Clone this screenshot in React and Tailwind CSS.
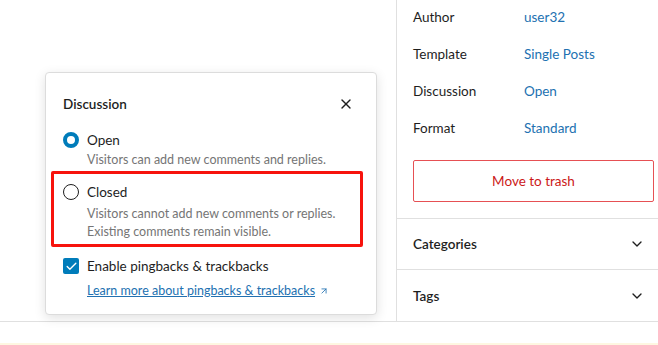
import { X, ChevronDown, Check, ArrowUpRight } from 'lucide-react'

const FONT = { fontFamily: 'Lato, "Liberation Sans", sans-serif' }

const META = [
  { label: 'Author', value: 'user32' },
  { label: 'Template', value: 'Single Posts' },
  { label: 'Discussion', value: 'Open' },
  { label: 'Format', value: 'Standard' },
]

function Radio({ checked }) {
  return checked ? (
    <span className="w-4 h-4 rounded-full border-[4px] border-[#007cba] bg-white flex-shrink-0" />
  ) : (
    <span className="w-4 h-4 rounded-full border border-[#1e1e1e] bg-white flex-shrink-0" />
  )
}

function DiscussionPopover() {
  return (
    <div className="absolute left-[45px] top-[72px] w-[332px] h-[243px] bg-white border border-[#dcdcdc] rounded-[4px] shadow-[0_3px_12px_rgba(0,0,0,0.12)] px-[17px] pt-[22px]">
      {/* Header */}
      <div className="flex items-center justify-between h-[18px]">
        <span className="text-[13.5px] font-semibold text-[#1e1e1e]">Discussion</span>
        <X size={16} strokeWidth={2} className="text-[#1e1e1e] mr-[5px]" />
      </div>

      {/* Open */}
      <div className="mt-[18px]">
        <div className="flex items-center gap-2 h-[18px]">
          <Radio checked />
          <span className="text-[13.5px] text-[#1e1e1e]">Open</span>
        </div>
        <div className="pl-6 mt-[2px] text-[12.5px] leading-[18px] text-[#757575]">
          Visitors can add new comments and replies.
        </div>
      </div>

      {/* Closed */}
      <div className="mt-[14px]">
        <div className="flex items-center gap-2 h-[18px]">
          <Radio />
          <span className="text-[13.5px] text-[#1e1e1e]">Closed</span>
        </div>
        <div className="pl-6 mt-[4px] text-[12.5px] leading-[18px] text-[#757575]">
          Visitors cannot add new comments or replies.
          <br />
          Existing comments remain visible.
        </div>
      </div>

      {/* Pingbacks */}
      <div className="mt-[16px] flex items-center gap-2 h-[18px]">
        <span className="w-4 h-4 rounded-[2px] bg-[#007cba] flex items-center justify-center flex-shrink-0">
          <Check size={13} strokeWidth={2.5} className="text-white" />
        </span>
        <span className="text-[13.5px] text-[#1e1e1e]">Enable pingbacks &amp; trackbacks</span>
      </div>
      <div className="mt-[7px] pl-6 flex items-center gap-1 h-[18px]">
        <span className="text-[12.5px] text-[#2271b1] underline">Learn more about pingbacks &amp; trackbacks</span>
        <ArrowUpRight size={10} strokeWidth={2} className="text-[#2271b1]" />
      </div>

      {/* Highlight annotation */}
      <div className="absolute left-[5px] top-[98px] w-[312px] h-[76px] border-[3px] border-[#f7130d] rounded-[2px] pointer-events-none" />
    </div>
  )
}

export default function App() {
  return (
    <div className="w-[658px] h-[345px] bg-white overflow-hidden flex flex-col" style={FONT}>
      <div className="flex h-[322px] border-b border-[#e0e0e0]">
        {/* Editor canvas */}
        <div className="flex-1 relative">
          <DiscussionPopover />
        </div>

        {/* Sidebar */}
        <div className="w-[262px] border-l border-[#e0e0e0] flex flex-col">
          <div className="pl-4 pr-[4px] pb-[16px] border-b border-[#e0e0e0]">
            <div className="-mt-[1px]">
              {META.map(row => (
                <div key={row.label} className="flex items-center h-[37px] text-[13.5px]">
                  <span className="w-[111px] text-[#1e1e1e]">{row.label}</span>
                  <span className="text-[#2271b1]">{row.value}</span>
                </div>
              ))}
            </div>
            <div className="mt-[13px] h-[42px] border border-[#e65054] rounded-[2px] flex items-center justify-center text-[13.5px] text-[#cc1818]">
              Move to trash
            </div>
          </div>
          <div className="h-[51px] pl-4 pr-[13px] flex items-center justify-between border-b border-[#e0e0e0]">
            <span className="text-[13.5px] font-semibold text-[#1e1e1e]">Categories</span>
            <ChevronDown size={16} strokeWidth={2} className="text-[#1e1e1e]" />
          </div>
          <div className="flex-1 pl-4 pr-[13px] pt-[1px] flex items-center justify-between">
            <span className="text-[13.5px] font-semibold text-[#1e1e1e]">Tags</span>
            <ChevronDown size={16} strokeWidth={2} className="text-[#1e1e1e]" />
          </div>
        </div>
      </div>
      <div className="flex-1 bg-white" />
      <div className="h-[2px] bg-[#fef7e1]" />
    </div>
  )
}
